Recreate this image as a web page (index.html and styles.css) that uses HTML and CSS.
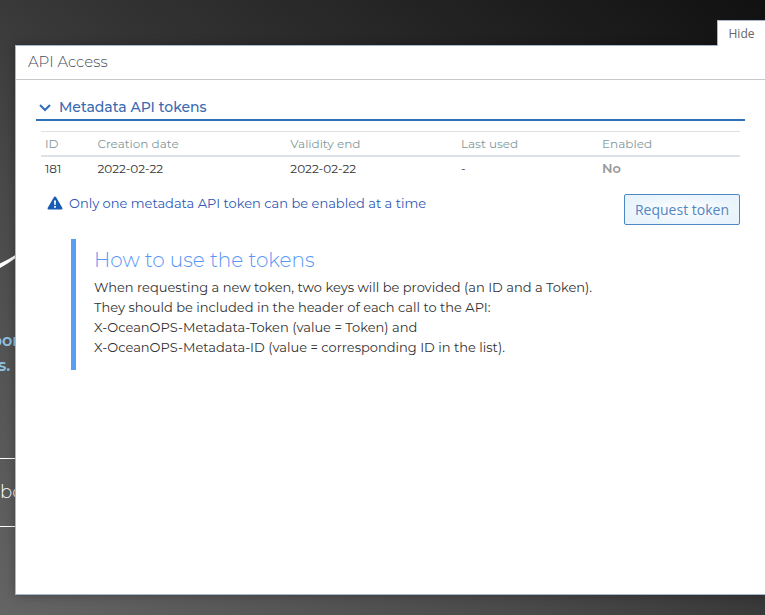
FILE: index.html
```html
<!DOCTYPE html>
<html lang="en">
<head>
<meta charset="utf-8">
<meta name="viewport" content="width=device-width, initial-scale=1">
<title>API Access</title>
<link rel="stylesheet" href="styles.css">
</head>
<body>
<div class="backdrop">
  <svg class="swoosh" width="17" height="24" viewBox="0 0 17 24" aria-hidden="true"><path d="M0 11.500 Q8 8 17 2 V5 Q9 11 0 16Z" fill="#fff"/></svg>
  <p class="tagline"><span>por</span><span>s.</span></p>
  <p class="about">bo</p>
</div>
<div class="drawer">
  <button class="hide" type="button">Hide</button>
  <main class="panel">
    <h1 class="title">API Access</h1>
    <section class="content">
      <h2 class="section-title">
        <svg width="12" height="8" viewBox="0 0 12 8" aria-hidden="true"><path d="M1 1 6 6 11 1" fill="none" stroke="#2f6db8" stroke-width="2"/></svg>
        Metadata API tokens
      </h2>
      <div class="section-body">
        <table class="tokens">
          <colgroup><col class="c-id"><col class="c-created"><col class="c-end"><col class="c-used"><col></colgroup>
          <thead><tr><th>ID</th><th>Creation date</th><th>Validity end</th><th>Last used</th><th>Enabled</th></tr></thead>
          <tbody><tr><td>181</td><td>2022-02-22</td><td>2022-02-22</td><td>-</td><td class="off">No</td></tr></tbody>
        </table>
        <div class="actions">
          <p class="notice">
            <svg width="16" height="14" viewBox="0 0 16 14" aria-hidden="true"><path d="M8 .5Q8.700.5 9 1L15.400 12Q15.800 13.500 14.500 13.500H1.500Q.2 13.500.6 12L7 1Q7.300.5 8 .5Z" fill="#175bb5"/><path d="M7 4.500H9L8.700 9H7.300ZM7.100 10H8.900V11.800H7.100Z" fill="#fff"/></svg>
            Only one metadata API token can be enabled at a time
          </p>
          <button class="request" type="button">Request token</button>
        </div>
        <aside class="help">
          <h3>How to use the tokens</h3>
          <p>When requesting a new token, two keys will be provided (an ID and a Token).<br>They should be included in the header of each call to the API:<br>X-OceanOPS-Metadata-Token (value = Token) and<br>X-OceanOPS-Metadata-ID (value = corresponding ID in the list).</p>
        </aside>
      </div>
    </section>
  </main>
</div>
</body>
</html>
```
FILE: styles.css
```css
* { box-sizing: border-box; }
body {
  margin: 0;
  min-height: 100vh;
  display: flex;
  background: linear-gradient(to top right, #646464 0%, #494949 35%, #343434 55%, #111 100%);
  font-family: Montserrat, Inter, sans-serif;
  font-weight: 400;
  font-size: 13px;
  color: #333;
  overflow: hidden;
}
h1, h2, h3, p { margin: 0; font-weight: 400; }
button { font-family: "Open Sans", sans-serif; cursor: pointer; }

.backdrop { position: absolute; inset: 0; overflow: hidden; }
.swoosh { position: absolute; left: 0; top: 252px; }
.tagline {
  position: absolute;
  left: -9px;
  top: 328px;
  color: #8fc4e4;
  font-size: 16px;
  font-weight: 600;
  line-height: 25px;
}
.tagline span { display: block; }
.tagline span + span { padding-left: 7px; }
.about {
  position: absolute;
  left: 0;
  top: 458px;
  width: 40px;
  border: 1px solid #fff;
  border-width: 1px 0;
  color: #fff;
  font-size: 18px;
  font-weight: 300;
  line-height: 67px;
}

.drawer {
  position: relative;
  flex: 1;
  display: flex;
  flex-direction: column;
  padding: 20px 0 20px 15px;
}
.hide {
  align-self: flex-end;
  width: 48px;
  height: 26px;
  margin-bottom: -1px;
  padding: 0;
  z-index: 1;
  background: #fff;
  border: 1px solid #a5b6cd;
  border-width: 1px 0 0 1px;
  color: #666;
  font-size: 12px;
}
.panel {
  flex: 1;
  background: #fff;
  border: 1px solid #a5b6cd;
  border-right: 0;
  box-shadow: 0 0 10px rgba(0, 0, 0, .3);
}
.title {
  padding: 0 12px 2px;
  border-bottom: 1px solid #c5c9cb;
  color: #444d57;
  font-size: 15px;
  font-weight: 300;
  line-height: 31px;
}
.content { padding: 16px 20px; }
.section-title {
  display: flex;
  align-items: center;
  gap: 8px;
  padding: 0 3px;
  border-bottom: 2px solid #2f71b8;
  color: #3969b1;
  font-size: 14px;
  font-weight: 500;
  line-height: 23px;
}
.section-body { padding: 10px 5px; }

.tokens {
  width: 100%;
  table-layout: fixed;
  border-collapse: collapse;
  font-size: 12px;
  line-height: 23px;
}
.tokens th, .tokens td { padding: 0 4px; text-align: left; }
.tokens th {
  border-top: 1px solid #dee2e6;
  border-bottom: 2px solid #dee2e6;
  color: #7f999d;
  font-weight: 400;
}
.tokens .off { color: #999; font-size: 13px; font-weight: 600; }
.c-id { width: 7.5%; }
.c-created { width: 27.6%; }
.c-end { width: 24.4%; }
.c-used { width: 20.2%; }

.actions {
  display: flex;
  justify-content: space-between;
  align-items: flex-start;
  padding: 14px 0 14px 6px;
}
.notice {
  display: flex;
  align-items: center;
  gap: 6px;
  color: #2e58b5;
  line-height: 18px;
}
.request {
  height: 31px;
  padding: 0 10px;
  border: 1px solid #4d87c4;
  border-radius: 2px;
  background: radial-gradient(#fff, #e8f3fb 75%);
  color: #5285c4;
  font-size: 14px;
}
.help {
  margin-left: 30px;
  padding: 7px 18px 13px;
  border-left: 5px solid #579ff5;
}
.help h3 { color: #5796f5; font-size: 20px; font-weight: 300; line-height: 28px; margin-bottom: 3px; }
.help p { line-height: 20px; }
```
